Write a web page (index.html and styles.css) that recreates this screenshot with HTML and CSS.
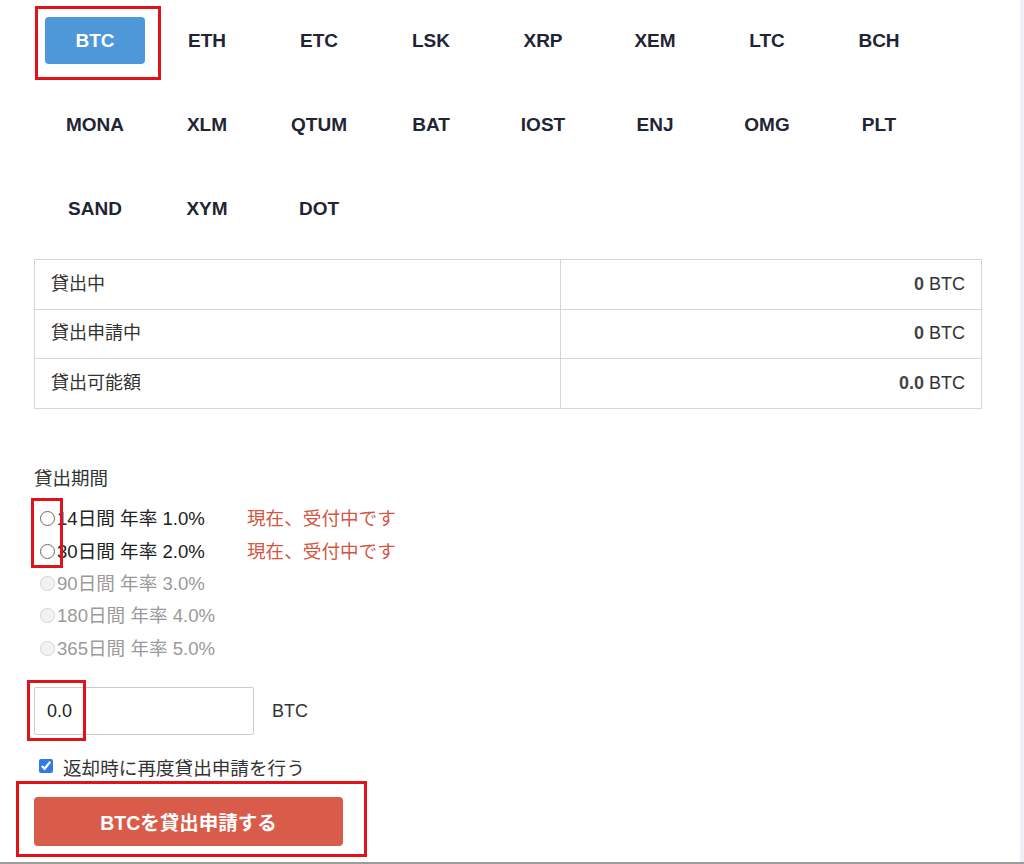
FILE: index.html
```html
<!DOCTYPE html>
<html lang="ja">
<head>
    <meta charset="UTF-8">
    <meta name="viewport" content="width=device-width, initial-scale=1.0">
    <title>貸出申請</title>
    <link rel="stylesheet" href="styles.css">
</head>
<body>
    <div class="screen">
        <main class="lending">
            <ul class="coin-tabs">
                <li><button class="coin-tab active">BTC</button></li>
                <li><button class="coin-tab">ETH</button></li>
                <li><button class="coin-tab">ETC</button></li>
                <li><button class="coin-tab">LSK</button></li>
                <li><button class="coin-tab">XRP</button></li>
                <li><button class="coin-tab">XEM</button></li>
                <li><button class="coin-tab">LTC</button></li>
                <li><button class="coin-tab">BCH</button></li>
                <li><button class="coin-tab">MONA</button></li>
                <li><button class="coin-tab">XLM</button></li>
                <li><button class="coin-tab">QTUM</button></li>
                <li><button class="coin-tab">BAT</button></li>
                <li><button class="coin-tab">IOST</button></li>
                <li><button class="coin-tab">ENJ</button></li>
                <li><button class="coin-tab">OMG</button></li>
                <li><button class="coin-tab">PLT</button></li>
                <li><button class="coin-tab">SAND</button></li>
                <li><button class="coin-tab">XYM</button></li>
                <li><button class="coin-tab">DOT</button></li>
            </ul>

            <table class="balance-table">
                <tr>
                    <td class="label">貸出中</td>
                    <td class="amount"><strong>0</strong> BTC</td>
                </tr>
                <tr>
                    <td class="label">貸出申請中</td>
                    <td class="amount"><strong>0</strong> BTC</td>
                </tr>
                <tr>
                    <td class="label">貸出可能額</td>
                    <td class="amount"><strong>0.0</strong> BTC</td>
                </tr>
            </table>

            <div class="term-label">貸出期間</div>
            <ul class="terms">
                <li>
                    <label><input type="radio" name="term" class="radio"><span>14日間 年率 1.0%</span></label>
                    <span class="status">現在、受付中です</span>
                </li>
                <li>
                    <label><input type="radio" name="term" class="radio"><span>30日間 年率 2.0%</span></label>
                    <span class="status">現在、受付中です</span>
                </li>
                <li class="disabled">
                    <label><input type="radio" name="term" class="radio" disabled><span>90日間 年率 3.0%</span></label>
                </li>
                <li class="disabled">
                    <label><input type="radio" name="term" class="radio" disabled><span>180日間 年率 4.0%</span></label>
                </li>
                <li class="disabled">
                    <label><input type="radio" name="term" class="radio" disabled><span>365日間 年率 5.0%</span></label>
                </li>
            </ul>

            <div class="amount-row">
                <input type="text" class="amount-input" value="0.0">
                <span class="unit">BTC</span>
            </div>

            <label class="renew">
                <input type="checkbox" checked>
                <span>返却時に再度貸出申請を行う</span>
            </label>

            <button class="submit-btn">BTCを貸出申請する</button>

            <!-- annotation boxes drawn over the screenshot -->
            <div class="mark mark-tab"></div>
            <div class="mark mark-radio"></div>
            <div class="mark mark-input"></div>
            <div class="mark mark-submit"></div>
        </main>
        <div class="side-strip"></div>
    </div>
</body>
</html>
```

FILE: styles.css
```css
* {
    box-sizing: border-box;
}

body {
    margin: 0;
    font-family: "Liberation Sans", "Noto Sans CJK JP", Arial, sans-serif;
    color: #333;
    background-color: #fff;
}

.screen {
    display: flex;
    height: 864px;
    border-bottom: 2px solid #9c9c9c;
    overflow: hidden;
}

.lending {
    position: relative;
    flex: 1;
    padding: 17px 38px 0 34px;
}

.side-strip {
    width: 5px;
    background-color: #eef0f6;
}

/* coin tabs */
.coin-tabs {
    list-style: none;
    margin: 0 0 0 5px;
    padding: 0;
    display: grid;
    grid-template-columns: repeat(8, 112px);
    grid-auto-rows: 47px;
    row-gap: 37px;
}

.coin-tabs li {
    display: flex;
    justify-content: center;
}

.coin-tab {
    width: 100px;
    height: 47px;
    border: none;
    border-radius: 4px;
    background: none;
    font-family: inherit;
    font-size: 19px;
    font-weight: bold;
    color: #1f2535;
    cursor: pointer;
}

.coin-tab.active {
    background-color: #4e97d9;
    color: #fff;
}

/* balances */
.balance-table {
    width: 948px;
    margin-top: 27px;
    border-collapse: collapse;
    font-size: 18px;
}

.balance-table td {
    height: 49.6px;
    padding: 0 16px;
    border: 1px solid #d6d6d6;
}

.balance-table td.label {
    width: 526px;
    padding-bottom: 5px;
}

.balance-table .amount {
    text-align: right;
}

.balance-table strong {
    color: #444;
}

/* loan terms */
.term-label {
    margin-top: 58px;
    font-size: 18.5px;
    line-height: 24px;
    color: #333;
}

.terms {
    list-style: none;
    margin: 10px 0 0;
    padding: 0;
}

.terms li {
    display: flex;
    align-items: center;
    height: 32.3px;
    font-size: 18.6px;
    color: #222;
}

.terms label {
    display: flex;
    align-items: center;
    width: 213px;
}

.terms .radio {
    appearance: none;
    width: 15px;
    height: 15px;
    margin: 4px 2px 0 6px;
    border: 1px solid #6a6a6a;
    border-radius: 50%;
    background-color: #fff;
    flex-shrink: 0;
}

.terms li.disabled {
    color: #9a9a9a;
}

.terms li.disabled .radio {
    border-color: #d2d2d2;
    background-color: #f2f2f2;
}

.status {
    color: #d4563f;
}

/* amount input */
.amount-row {
    display: flex;
    align-items: center;
    margin-top: 25px;
}

.amount-input {
    width: 220px;
    height: 48px;
    padding: 0 12px;
    border: 1px solid #ccc;
    border-radius: 2px;
    font-family: inherit;
    font-size: 18px;
    color: #222;
}

.unit {
    margin-left: 18px;
    font-size: 18px;
    color: #333;
}

.renew {
    display: flex;
    align-items: center;
    height: 24px;
    margin-top: 19px;
    font-size: 18.6px;
    color: #333;
}

.renew input {
    width: 14px;
    height: 14px;
    margin: 0 10px 0 5px;
    accent-color: #2f7ae5;
}

.submit-btn {
    display: block;
    width: 309px;
    height: 49px;
    margin-top: 19px;
    border: none;
    border-radius: 4px;
    background-color: #d95b49;
    color: #fff;
    font-family: inherit;
    font-size: 19.5px;
    font-weight: bold;
    cursor: pointer;
}

/* red annotation boxes */
.mark {
    position: absolute;
    border: 3px solid #e0121c;
}

.mark-tab {
    left: 35px;
    top: 6px;
    width: 126px;
    height: 74px;
}

.mark-radio {
    left: 31px;
    top: 498px;
    width: 32px;
    height: 70px;
}

.mark-input {
    left: 27px;
    top: 680px;
    width: 59px;
    height: 61px;
}

.mark-submit {
    left: 16px;
    top: 781px;
    width: 351px;
    height: 76px;
}
```
